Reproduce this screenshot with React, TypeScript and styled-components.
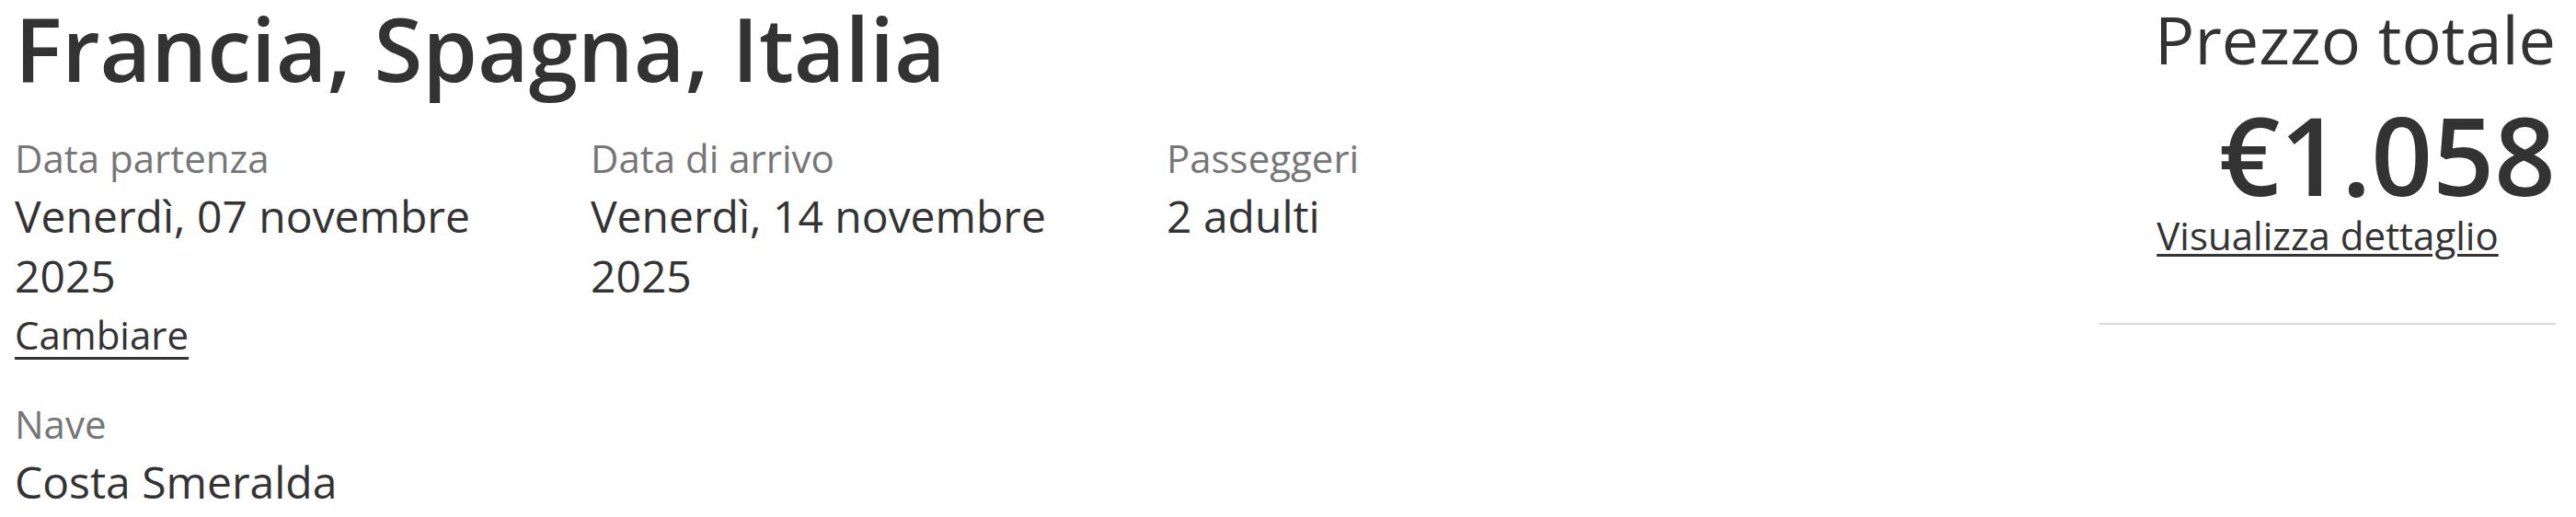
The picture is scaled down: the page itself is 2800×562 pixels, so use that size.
import React from "react";
import styled, { createGlobalStyle } from "styled-components";

const GlobalStyle = createGlobalStyle`
  html, body {
    margin: 0;
    padding: 0;
    background: #ffffff;
  }
  body {
    font-family: "Open Sans", "Noto Sans", "Liberation Sans", sans-serif;
    color: #333333;
  }
`;

const Page = styled.div`
  display: flex;
  align-items: flex-start;
  padding: 0 22px 0 16px;
  width: 2800px;
  box-sizing: border-box;
`;

const Main = styled.main`
  flex: 1;
  display: flex;
  flex-direction: column;
`;

const Title = styled.h1`
  margin: 0;
  font-size: 96px;
  line-height: 104px;
  font-weight: 600;
  color: #333333;
`;

const InfoGrid = styled.div`
  display: grid;
  grid-template-columns: repeat(3, 600px);
  column-gap: 26px;
  row-gap: 40px;
  margin-top: 38px;
  align-items: start;
`;

const Field = styled.div`
  display: flex;
  flex-direction: column;
  align-items: flex-start;
`;

const Label = styled.span`
  font-size: 42px;
  line-height: 60px;
  color: #767676;
`;

const Value = styled.span`
  font-size: 48px;
  line-height: 65px;
  color: #333333;
`;

const TextLink = styled.a<{ $offset: number; $thick: number; $lh: number; $top?: number }>`
  margin-top: ${(p) => p.$top ?? 0}px;
  font-size: 42px;
  line-height: ${(p) => p.$lh}px;
  color: #333333;
  text-decoration: underline;
  text-decoration-thickness: ${(p) => p.$thick}px;
  text-underline-offset: ${(p) => p.$offset}px;
  cursor: pointer;
`;

const Aside = styled.aside`
  width: 496px;
  flex: 0 0 496px;
  display: flex;
  flex-direction: column;
`;

const PriceLabel = styled.div`
  font-size: 72px;
  line-height: 84px;
  text-align: right;
  color: #333333;
`;

const Price = styled.div`
  margin-top: 25px;
  font-size: 117px;
  line-height: 117px;
  font-weight: 600;
  text-align: right;
  color: #333333;
`;

const DetailRow = styled.div`
  display: flex;
  justify-content: center;
`;

const Divider = styled.hr`
  margin: 65px 0 0;
  border: 0;
  height: 2px;
  background: #d9d9d9;
  width: 100%;
`;

export default function App() {
  return (
    <>
      <GlobalStyle />
      <Page>
        <Main>
          <Title>Francia, Spagna, Italia</Title>
          <InfoGrid>
            <Field>
              <Label>Data partenza</Label>
              <Value>Venerdì, 07 novembre 2025</Value>
              <TextLink $offset={8} $thick={3} $lh={54} $top={5}>
                Cambiare
              </TextLink>
            </Field>
            <Field>
              <Label>Data di arrivo</Label>
              <Value>Venerdì, 14 novembre 2025</Value>
            </Field>
            <Field>
              <Label>Passeggeri</Label>
              <Value>2 adulti</Value>
            </Field>
            <Field>
              <Label>Nave</Label>
              <Value>Costa Smeralda</Value>
            </Field>
          </InfoGrid>
        </Main>
        <Aside>
          <PriceLabel>Prezzo totale</PriceLabel>
          <Price>€1.058</Price>
          <DetailRow>
            <TextLink $offset={4} $thick={3} $lh={60}>
              Visualizza dettaglio
            </TextLink>
          </DetailRow>
          <Divider />
        </Aside>
      </Page>
    </>
  );
}
